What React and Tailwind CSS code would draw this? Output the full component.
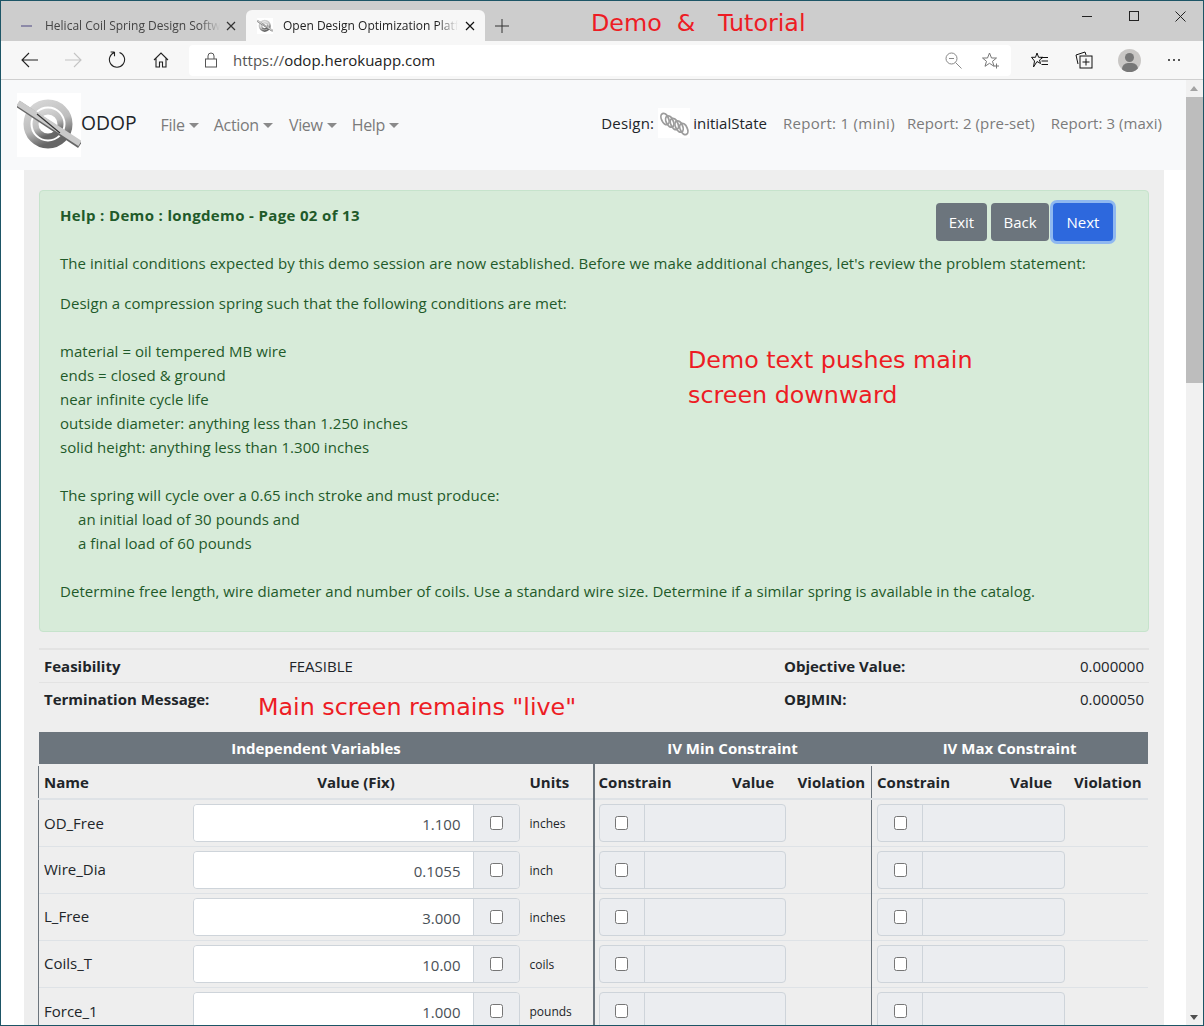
import React from 'react';

const rows = [
  { name: 'OD_Free', value: '1.100', units: 'inches' },
  { name: 'Wire_Dia', value: '0.1055', units: 'inch' },
  { name: 'L_Free', value: '3.000', units: 'inches' },
  { name: 'Coils_T', value: '10.00', units: 'coils' },
  { name: 'Force_1', value: '1.000', units: 'pounds' },
];

const Logo = ({ size = 64, id = 'ring' }) => (
  <svg width={size} height={size} viewBox="0 0 64 64" className="shrink-0">
    <defs>
      <linearGradient id={id} x1="0" y1="0" x2="0.4" y2="1">
        <stop offset="0" stopColor="#d8d8d8" />
        <stop offset="0.6" stopColor="#bdbdbd" />
        <stop offset="1" stopColor="#666" />
      </linearGradient>
    </defs>
    <rect width="64" height="64" fill="#fff" />
    <circle cx="31" cy="31" r="21" fill="none" stroke={`url(#${id})`} strokeWidth="7" />
    <circle cx="31" cy="31" r="12.500" fill="none" stroke={`url(#${id})`} strokeWidth="6" />
    <path d="M1 11 L63 52" stroke="#666" strokeWidth="7" />
    <path d="M1 10 L63 50.500" stroke="#cacaca" strokeWidth="6" />
    <path d="M20 21 L43 40" stroke="#333" strokeWidth="1.200" />
  </svg>
);

const Spring = () => (
  <svg width="32" height="30" viewBox="0 0 32 30" className="bg-white">
    {[0, 1, 2, 3, 4].map(i => (
      <ellipse key={i} cx={7 + i * 4.700} cy={11 + i * 2.500} rx="3.500" ry="6" transform={`rotate(-25 ${7 + i * 4.700} ${11 + i * 2.500})`} fill="none" stroke="#9c9c9c" strokeWidth="1.800" />
    ))}
  </svg>
);

const Caret = () => (
  <span className="ml-[4px] inline-block align-[3px] w-0 h-0 border-x-[5px] border-x-transparent border-t-[5px] border-t-[#8a8a8a]" />
);

const NavMenu = ({ label, className }) => (
  <span className={`text-[#7b7b7b] text-[16px] tracking-[-0.3px] ${className}`}>{label}<Caret /></span>
);

const Check = () => (
  <span className="block w-[13px] h-[14px] bg-white border border-[#767676] rounded-[2.500px]" />
);

const ConstraintGroup = () => (
  <div className="flex h-[38px] w-[187.500px] bg-[#ebedf0] border border-[#ced4da] rounded-[4px] overflow-hidden">
    <span className="w-[45px] h-full flex items-center justify-center border-r border-[#ced4da]"><Check /></span>
  </div>
);

const Row = ({ name, value, units }) => (
  <tr className="h-[47px] border-t border-[#dee2e6]">
    <td className="pl-[5px] border-l border-[#6c757d] text-[#212529] text-[15px]">{name}</td>
    <td className="px-[5px]">
      <div className="flex h-[38px] border border-[#ced4da] rounded-[4px] overflow-hidden">
        <span className="flex-1 bg-white text-right pr-[12px] pt-[8px] text-[#495057] text-[15px]">{value}</span>
        <span className="w-[46px] h-full shrink-0 flex items-center justify-center bg-[#ebedf0] border-l border-[#ced4da]"><Check /></span>
      </div>
    </td>
    <td className="pl-[5px] pt-[2px] text-[12px] text-[#212529]">{units}</td>
    <td colSpan={3} className="pl-[4px] border-l-2 border-[#6c757d]"><ConstraintGroup /></td>
    <td colSpan={3} className="pl-[5px] border-l border-[#6c757d]"><ConstraintGroup /></td>
  </tr>
);

const Annotation = ({ className, children }) => (
  <span className={`absolute text-[#ed1c24] text-[23.800px] leading-[35px] whitespace-pre font-['DejaVu_Sans',sans-serif] ${className}`}>{children}</span>
);

const TabTitle = ({ className, children }) => (
  <span className={`overflow-hidden whitespace-nowrap [mask-image:linear-gradient(to_right,black_88%,transparent)] ${className}`}>{children}</span>
);

export default function App() {
  return (
    <div className="relative w-[1204px] h-[1026px] overflow-hidden bg-white border border-[#1d5566] font-['Open_Sans',sans-serif]">
      {/* browser tabs */}
      <div className="h-[40px] bg-[#cdcdcd] flex items-end pl-[9px] relative">
        <div className="w-[236px] h-[31px] flex items-center pl-[11px] text-[12px] text-[#444]">
          <span className="w-[11px] h-[2px] bg-[#8d8aa8] mr-[13px]" />
          <TabTitle className="w-[175px]">Helical Coil Spring Design Software</TabTitle>
          <svg width="10" height="10" viewBox="0 0 10 10" className="ml-[6px]"><path d="M1 1l8 8M9 1l-8 8" stroke="#333" strokeWidth="1.200" /></svg>
        </div>
        <div className="w-[239px] h-[31px] bg-[#f7f7f7] rounded-t-[6px] flex items-center pl-[11px] text-[12px] text-[#222]">
          <Logo size={16} id="ring-tab" />
          <TabTitle className="ml-[10px] w-[175px]">Open Design Optimization Platform</TabTitle>
          <svg width="10" height="10" viewBox="0 0 10 10" className="ml-[7px]"><path d="M1 1l8 8M9 1l-8 8" stroke="#111" strokeWidth="1.200" /></svg>
        </div>
        <svg width="14" height="14" viewBox="0 0 14 14" className="ml-[10px] mb-[8px]"><path d="M7 0v14M0 7h14" stroke="#333" strokeWidth="1" /></svg>
        <div className="absolute right-0 top-0 flex">
          <span className="w-[47px] h-[30px] flex items-center justify-center"><svg width="10" height="10" viewBox="0 0 10 10"><path d="M0 5.500h10" stroke="#222" /></svg></span>
          <span className="w-[47px] h-[30px] flex items-center justify-center"><svg width="10" height="10" viewBox="0 0 10 10"><rect x=".5" y=".5" width="9" height="9" fill="none" stroke="#222" /></svg></span>
          <span className="w-[46px] h-[30px] flex items-center justify-center"><svg width="11" height="11" viewBox="0 0 11 11"><path d="M.5.5l10 10M10.500.5l-10 10" stroke="#222" /></svg></span>
        </div>
      </div>

      {/* address bar */}
      <div className="h-[39px] bg-[#f7f7f7] border-b border-[#cfcfcf] flex items-center pl-[20px] pr-[20px]">
        <svg width="18" height="16" viewBox="0 0 18 16" className="shrink-0"><path d="M17 8H1M8 1L1 8l7 7" fill="none" stroke="#222" strokeWidth="1.100" /></svg>
        <svg width="18" height="16" viewBox="0 0 18 16" className="ml-[25px] shrink-0"><path d="M1 8h16M10 1l7 7-7 7" fill="none" stroke="#c4c4c4" strokeWidth="1.100" /></svg>
        <svg width="18" height="18" viewBox="0 0 18 18" className="ml-[26px] shrink-0"><path d="M6.500 1.500a7.600 7.600 0 1 0 5 0M6.500 1v4.200M6.500 1H2.600" fill="none" stroke="#222" strokeWidth="1.100" /></svg>
        <svg width="16" height="16" viewBox="0 0 16 16" className="ml-[27px] shrink-0"><path d="M1 8l7-7 7 7M3 6.500V15h3.500v-5h3v5H13V6.500" fill="none" stroke="#222" strokeWidth="1.100" /></svg>
        <div className="ml-[20px] w-[822px] h-[31px] bg-white rounded-[4px] flex items-center pl-[16px] pr-[12px] shrink-0">
          <svg width="12" height="16" viewBox="0 0 12 16"><rect x=".5" y="7" width="11" height="8" fill="none" stroke="#555" /><path d="M3 7V4a3 3 0 0 1 6 0v3" fill="none" stroke="#555" /></svg>
          <span className="ml-[16px] text-[15px] text-[#555]">https://<span className="text-[#222]">odop.herokuapp.com</span></span>
          <svg width="17" height="17" viewBox="0 0 17 17" className="ml-auto"><circle cx="6.500" cy="6.500" r="5.500" fill="none" stroke="#888" /><path d="M4 6.500h5M10.500 10.500l6 6" stroke="#888" /></svg>
          <svg width="17" height="17" viewBox="0 0 17 17" className="ml-[20px]"><path d="M7.500 1l2 5h5l-4 3.300 1.500 5-4.500-3-4.500 3 1.500-5L.5 6h5z" fill="none" stroke="#777" /><path d="M12 14h5M14.500 11.500v5" stroke="#777" /></svg>
        </div>
        <svg width="18" height="17" viewBox="0 0 18 17" className="ml-[20px] shrink-0"><path d="M6 1l1.600 4.300H12L8.500 8l1 3.500L6 9.500 2.500 15l1-6L.5 5.300H4.500z" fill="none" stroke="#111" /><path d="M10 5.500h7M10.500 9h6.500M10.500 12.500h6.500" stroke="#111" /></svg>
        <svg width="18" height="18" viewBox="0 0 18 18" className="ml-[26px] shrink-0"><path d="M3 13L1 4l9-3 1 3" fill="none" stroke="#111" /><rect x="5" y="5" width="12" height="12" fill="none" stroke="#111" /><path d="M11 7.500v7M7.500 11h7" stroke="#111" /></svg>
        <span className="ml-[25px] w-[23px] h-[23px] rounded-full bg-[#c9c7c5] relative overflow-hidden shrink-0">
          <span className="absolute left-[7px] top-[4px] w-[9px] h-[9px] rounded-full bg-[#777]" />
          <span className="absolute left-[3.500px] top-[14px] w-[16px] h-[12px] rounded-full bg-[#777]" />
        </span>
        <span className="ml-[27px] flex gap-[3px] shrink-0">
          <span className="w-[2px] h-[2px] bg-[#222] rounded-full" />
          <span className="w-[2px] h-[2px] bg-[#222] rounded-full" />
          <span className="w-[2px] h-[2px] bg-[#222] rounded-full" />
        </span>
      </div>

      <div className="flex h-[946px]">
        <div className="w-[1185px] shrink-0">
          {/* app navbar */}
          <nav className="h-[90px] bg-[#f8f9fa] flex items-center pl-[16px] pr-[24px]">
            <Logo />
            <span className="text-[19.300px] text-[#212529] -mt-[4px]">ODOP</span>
            <NavMenu label="File" className="ml-[24px]" />
            <NavMenu label="Action" className="ml-[15px]" />
            <NavMenu label="View" className="ml-[16px]" />
            <NavMenu label="Help" className="ml-[15px]" />
            <div className="ml-auto flex items-center text-[15px] -mt-[4px]">
              <span className="text-[#212529] tracking-[0.2px]">Design:</span>
              <span className="ml-[4px]"><Spring /></span>
              <span className="ml-[3px] text-[#212529]">initialState</span>
              <span className="ml-[16px] text-[#7b7b7b] tracking-[0.3px]">Report: 1 (mini)</span>
              <span className="ml-[12px] text-[#7b7b7b] tracking-[0.1px]">Report: 2 (pre-set)</span>
              <span className="ml-[16px] text-[#7b7b7b] tracking-[0.05px]">Report: 3 (maxi)</span>
            </div>
          </nav>

          <div className="ml-[23px] w-[1140px] h-[856px] bg-[#eeeeee] px-[15px] pt-[20px]">
            {/* demo text */}
            <div className="relative h-[442px] bg-[#d7ebd9] border border-[#c6e3cc] rounded-[4px] px-[20px] pt-[12px] text-[#1f5a2a] text-[15px] leading-[24px] tracking-[0.05px]">
              <div className="flex justify-between">
                <b className="font-bold tracking-[0.35px]">Help : Demo : longdemo - Page 02 of 13</b>
                <div className="flex gap-[4px] mr-[15px] text-white tracking-normal">
                  <span className="h-[38px] w-[51px] flex items-center justify-center bg-[#6c757d] rounded-[4px]">Exit</span>
                  <span className="h-[38px] w-[58px] flex items-center justify-center bg-[#6c757d] rounded-[4px]">Back</span>
                  <span className="h-[38px] w-[60px] flex items-center justify-center bg-[#2d68dd] rounded-[4px] ring-[3px] ring-[#8fb8f0]">Next</span>
                </div>
              </div>
              <p className="mt-[10px]">The initial conditions expected by this demo session are now established. Before we make additional changes, let's review the problem statement:</p>
              <p className="mt-[16px]">Design a compression spring such that the following conditions are met:</p>
              <p className="mt-[24px]">material = oil tempered MB wire</p>
              <p>ends = closed &amp; ground</p>
              <p>near infinite cycle life</p>
              <p>outside diameter: anything less than 1.250 inches</p>
              <p>solid height: anything less than 1.300 inches</p>
              <p className="mt-[24px]">The spring will cycle over a 0.65 inch stroke and must produce:</p>
              <p className="pl-[18px]">an initial load of 30 pounds and</p>
              <p className="pl-[18px]">a final load of 60 pounds</p>
              <p className="mt-[24px]">Determine free length, wire diameter and number of coils. Use a standard wire size. Determine if a similar spring is available in the catalog.</p>
              <Annotation className="left-[648px] top-[152px] tracking-normal">Demo text pushes main{'\n'}screen downward</Annotation>
            </div>

            {/* feasibility */}
            <div className="mt-[16px] border-t-2 border-[#e3e3e3] text-[15px] text-[#212529]">
              <div className="h-[33px] flex items-center px-[5px] border-b border-[#e3e3e3]">
                <b className="w-[245px] font-bold">Feasibility</b>
                <span className="w-[495px]">FEASIBLE</span>
                <b className="font-bold">Objective Value:</b>
                <span className="ml-auto">0.000000</span>
              </div>
              <div className="relative h-[32px] flex items-center px-[5px]">
                <b className="w-[740px] font-bold">Termination Message:</b>
                <b className="font-bold">OBJMIN:</b>
                <span className="ml-auto">0.000050</span>
                <Annotation className="left-[219px] top-[7px]">Main screen remains "live"</Annotation>
              </div>
            </div>

            {/* design table */}
            <table className="mt-[17px] -ml-[1px] w-[1109px] table-fixed border-collapse text-[15px] text-[#212529]">
              <colgroup>
                <col className="w-[149px]" /><col className="w-[337px]" /><col className="w-[69px]" />
                <col className="w-[122px]" /><col className="w-[75px]" /><col className="w-[81px]" />
                <col className="w-[121px]" /><col className="w-[77px]" /><col className="w-[78px]" />
              </colgroup>
              <thead>
                <tr className="h-[33px] bg-[#6c757d] text-white border-b-2 border-[#eeeeee]">
                  <th colSpan={3} className="font-bold">Independent Variables</th>
                  <th colSpan={3} className="font-bold">IV Min Constraint</th>
                  <th colSpan={3} className="font-bold">IV Max Constraint</th>
                </tr>
                <tr className="h-[34px] border-b-2 border-[#dee2e6]">
                  <th className="pl-[5px] text-left font-bold border-l border-[#6c757d]">Name</th>
                  <th className="text-center font-bold">Value (Fix)</th>
                  <th className="pl-[5px] text-left font-bold">Units</th>
                  <th className="pl-[4px] text-left font-bold border-l-2 border-[#6c757d]">Constrain</th>
                  <th className="text-center font-bold">Value</th>
                  <th className="pr-[6px] text-right font-bold">Violation</th>
                  <th className="pl-[5px] text-left font-bold border-l border-[#6c757d]">Constrain</th>
                  <th className="text-center font-bold">Value</th>
                  <th className="pr-[6px] text-right font-bold">Violation</th>
                </tr>
              </thead>
              <tbody>
                {rows.map(r => <Row key={r.name} {...r} />)}
              </tbody>
            </table>
          </div>
        </div>

        {/* scrollbar */}
        <div className="w-[17px] shrink-0 bg-[#f1f1f1] relative">
          <span className="absolute left-[4px] top-[6px] w-0 h-0 border-x-[4px] border-x-transparent border-b-[5px] border-b-[#a3a3a3]" />
          <span className="absolute left-0 top-[17px] w-[17px] h-[286px] bg-[#bdbdbd]" />
          <span className="absolute left-[4px] bottom-[6px] w-0 h-0 border-x-[4px] border-x-transparent border-t-[5px] border-t-[#505050]" />
        </div>
      </div>

      <Annotation className="left-[590px] top-[5px]">Demo  &amp;   Tutorial</Annotation>
    </div>
  );
}
